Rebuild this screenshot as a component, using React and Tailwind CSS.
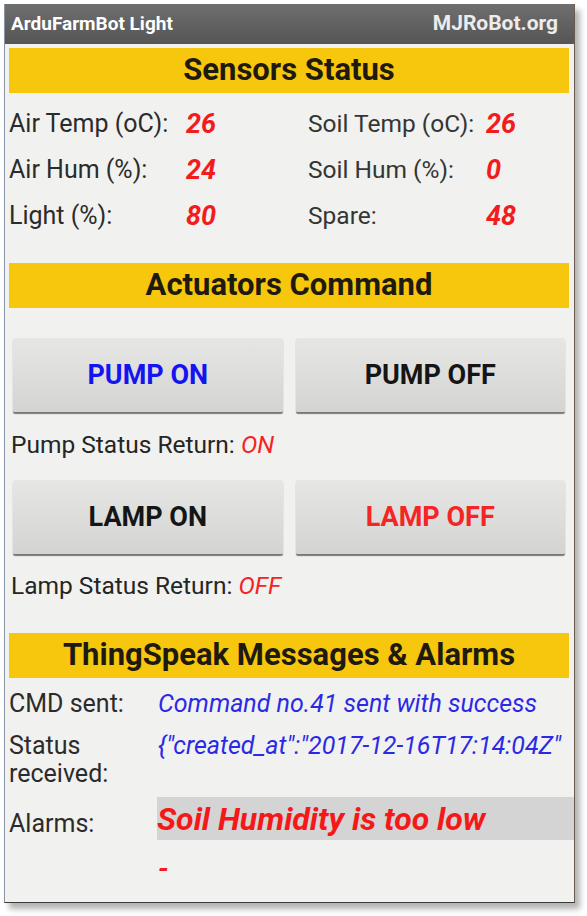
import React from 'react';

const font = { fontFamily: 'Roboto, "Liberation Sans", sans-serif' };

const sensors = [
  ['Air Temp (oC):', '26', 'Soil Temp (oC):', '26'],
  ['Air Hum (%):', '24', 'Soil Hum (%):', '0'],
  ['Light (%):', '80', 'Spare:', '48'],
];

function SectionBar({ children, className = '' }) {
  return (
    <div className={`mx-[4px] mr-[5px] h-[45px] bg-[#f6c70c] flex items-center justify-center text-[31px] font-bold text-[#1f1a10] ${className}`}>
      {children}
    </div>
  );
}

function CmdButton({ label, color }) {
  return (
    <button className={`flex-1 h-[74px] rounded-[2px] bg-gradient-to-b from-[#e6e6e5] to-[#d4d4d3] shadow-[0_2px_1px_rgba(0,0,0,0.5)] text-[27px] font-bold ${color}`}>
      {label}
    </button>
  );
}

export default function App() {
  return (
    <div className="w-[587px] h-[916px] bg-white pt-[4px] pl-[4px]" style={font}>
      <div className="w-[571px] h-[899px] bg-[#f1f1ef] border-l border-r border-b border-l-[#8a96a8] border-r-[#6b5a50] border-b-[#3a3a3a] shadow-[5px_6px_6px_rgba(0,0,0,0.3)] flex flex-col overflow-hidden">
        {/* Title bar */}
        <div className="h-[40px] bg-gradient-to-b from-[#6f6f6f] to-[#555] flex items-center justify-between px-[6px] pr-[16px] text-white text-[19px] font-bold">
          <span>ArduFarmBot Light</span>
          <span className="text-[21px] text-[#ececec]">MJRoBot.org</span>
        </div>

        <SectionBar className="mt-[4px]">Sensors Status</SectionBar>

        {/* Sensors */}
        <div className="mt-[8px] px-[4px]">
          {sensors.map(([l1, v1, l2, v2]) => (
            <div key={l1} className="h-[46px] flex items-center">
              <span className="w-[177px] text-[25px] text-[#2b2b2b]">{l1}</span>
              <span className="w-[122px] text-[27px] font-bold italic text-[#f21c1c]">{v1}</span>
              <span className="w-[178px] text-[24.5px] text-[#353535]">{l2}</span>
              <span className="text-[27px] font-bold italic text-[#f21c1c]">{v2}</span>
            </div>
          ))}
        </div>

        <SectionBar className="mt-[24px]">Actuators Command</SectionBar>

        {/* Pump */}
        <div className="mt-[30px] flex gap-[13px] pl-[8px] pr-[9px]">
          <CmdButton label="PUMP ON" color="text-[#1414f0]" />
          <CmdButton label="PUMP OFF" color="text-[#151515]" />
        </div>
        <div className="mt-[18px] h-[30px] flex items-center px-[6px] text-[24.5px] text-[#252525]">
          Pump Status Return:&nbsp;<span className="italic text-[#f22424]">ON</span>
        </div>

        {/* Lamp */}
        <div className="mt-[20px] flex gap-[13px] pl-[8px] pr-[9px]">
          <CmdButton label="LAMP ON" color="text-[#151515]" />
          <CmdButton label="LAMP OFF" color="text-[#f42525]" />
        </div>
        <div className="mt-[17px] h-[30px] flex items-center px-[6px] text-[24.5px] text-[#252525]">
          Lamp Status Return:&nbsp;<span className="italic text-[#f22424]">OFF</span>
        </div>

        <SectionBar className="mt-[32px]">ThingSpeak Messages &amp; Alarms</SectionBar>

        {/* Messages */}
        <div className="mt-[12px] flex items-center h-[28px] px-[4px]">
          <span className="w-[149px] shrink-0 text-[25px] text-[#2b2b2b]">CMD sent:</span>
          <span className="text-[25px] italic text-[#2a2ae6] whitespace-nowrap">Command no.41 sent with success</span>
        </div>
        <div className="mt-[14px] flex px-[4px]">
          <span className="w-[149px] shrink-0 text-[25px] leading-[28px] text-[#2b2b2b]">
            Status
            <br />
            received:
          </span>
          <span className="text-[25px] leading-[28px] italic text-[#2a2ae6] whitespace-nowrap">
            {'{"created_at":"2017-12-16T17:14:04Z"'}
          </span>
        </div>
        <div className="mt-[9px] flex items-end px-[4px]">
          <span className="w-[148px] shrink-0 text-[25px] leading-[28px] text-[#2b2b2b] mb-[2px]">Alarms:</span>
          <div className="flex-1 h-[43px] bg-[#d4d4d4] flex items-center text-[32px] font-bold italic text-[#f51818] -mr-[4px]">
            Soil Humidity is too low
          </div>
        </div>
        <div className="mt-[14px] pl-[153px] text-[28px] font-bold italic text-[#f01d1d] leading-[30px]">-</div>
      </div>
    </div>
  );
}
